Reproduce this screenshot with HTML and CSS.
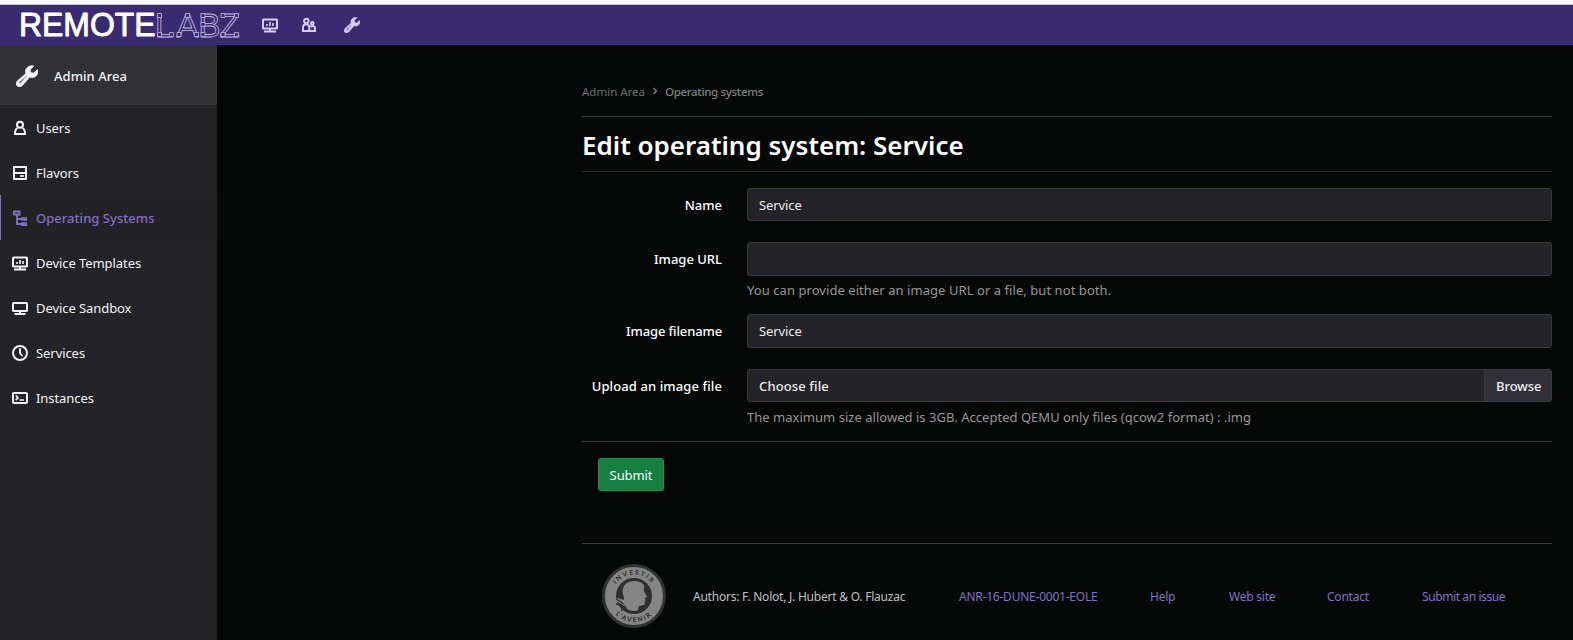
FILE: index.html
```html
<!DOCTYPE html>
<html lang="en">
<head>
<meta charset="utf-8">
<title>Edit operating system: Service</title>
<link rel="stylesheet" href="styles.css">
</head>
<body>
<svg class="defs" aria-hidden="true">
  <symbol id="chart-screen" viewBox="0 0 16 16"><rect x="1" y="2.500" width="14" height="9" rx=".6" fill="none" stroke="currentColor" stroke-width="2"/><path d="M8 11v3M2 14.500h12" stroke="currentColor" stroke-width="2"/><path d="M5 7v2M8 5v4M11 6v3" stroke="currentColor" stroke-width="1.600"/></symbol>
  <symbol id="screen" viewBox="0 0 16 16"><rect x="1" y="3" width="14" height="8" rx=".6" fill="none" stroke="currentColor" stroke-width="2"/><path d="M8 11v3M2.500 14h11" stroke="currentColor" stroke-width="2"/></symbol>
  <symbol id="wrench" viewBox="0 0 22 22"><path fill="currentColor" stroke="currentColor" stroke-width=".7" stroke-linejoin="round" fill-rule="evenodd" d="M17.800.9C14.200-.1 9.500 2.200 9.500 6.200c0 .8 0 1.500.3 2.200L1.500 15.700c-1.700 1.500-1.700 3.800-.3 5.200s3.700 1.300 5.200-.4l7.500-8.400c.7.3 1.400.4 2.300.4 4 0 6.600-4 5.300-7.900l-3.900 3.500-2.900-.6-.5-2.700zM11 11l-6.500 7.200c-.9.900-2-.3-1.100-1.200l7.100-6.400z"/></symbol>
  <symbol id="user" viewBox="0 0 16 16"><circle cx="8" cy="4.800" r="3" fill="none" stroke="currentColor" stroke-width="2"/><path d="M5.500 8C3.700 9 3 11 3 14h10c0-3-.7-5-2.500-6" fill="none" stroke="currentColor" stroke-width="2"/></symbol>
  <symbol id="users" viewBox="0 0 16 16"><g fill="none" stroke="currentColor" stroke-width="1.900"><circle cx="5.300" cy="3.900" r="2.200"/><circle cx="11.300" cy="6.200" r="1.300"/><path d="M2 14V10.500C2 8.500 3 7.300 5 7.300s3.300 1.200 3.300 3.200V14zM8 14h6v-2.300c0-1.700-1-2.700-2.700-2.700-1.300 0-2.200.4-2.800 1.200"/></g></symbol>
  <symbol id="disk" viewBox="0 0 16 16"><path d="M2 2h12v12H2zM2 8h12" fill="none" stroke="currentColor" stroke-width="2" stroke-linejoin="round"/><path d="M8 11h4" stroke="currentColor" stroke-width="1.700"/></symbol>
  <symbol id="tree" viewBox="0 0 16 16"><path d="M2 1.500h5.500v3H2zM5 5v9h5M5 9h5" fill="none" stroke="currentColor" stroke-width="1.900"/><path d="M9 7.200H15v3.500H9zM9 12.300H15V16H9z" fill="currentColor"/></symbol>
  <symbol id="clock" viewBox="0 0 16 16"><circle cx="8" cy="8" r="7" fill="none" stroke="currentColor" stroke-width="2"/><path d="M8 4v4.200l2 2.300" fill="none" stroke="currentColor" stroke-width="1.900" stroke-linecap="round"/></symbol>
  <symbol id="terminal" viewBox="0 0 16 16"><rect x="1" y="3" width="14" height="10" rx=".8" fill="none" stroke="currentColor" stroke-width="2"/><path d="M3.700 5.500L6 7.800l-2.300 2.300M7.500 10H12" fill="none" stroke="currentColor" stroke-width="1.700"/></symbol>
</svg>

<header class="topbar">
  <svg class="brand" viewBox="0 0 222 41" role="img" aria-label="RemoteLabz">
    <text class="brand-solid" x="-1" y="32" textLength="136.500" lengthAdjust="spacingAndGlyphs">REMOTE</text>
    <g class="brand-outline">
      <text y="32.500" x="135 156.500 178.600 199.500">LABZ</text>
      <path class="brand-nodes" d="M137.500 9.500h4v4h-4zM137.500 28.500h4v4h-4zM149.500 28.500h4v4h-4zM157 28.500h4v4h-4zM174.500 28.500h4v4h-4zM165.500 9.500h4v4h-4zM181 9.500h4v4h-4zM181 18.500h4v4h-4zM181 28.500h4v4h-4zM201 9.500h4v4h-4zM214.500 9.500h4v4h-4zM201 28.500h4v4h-4zM214.500 28.500h4v4h-4z"/>
    </g>
  </svg>
  <nav class="topnav">
    <svg><use href="#chart-screen"/></svg>
    <svg><use href="#users"/></svg>
    <svg class="topnav-admin"><use href="#wrench"/></svg>
  </nav>
</header>

<div class="shell">
  <aside class="sidebar">
    <div class="sidebar-title"><svg><use href="#wrench"/></svg><span>Admin Area</span></div>
    <a class="item"><svg><use href="#user"/></svg><span>Users</span></a>
    <a class="item"><svg><use href="#disk"/></svg><span>Flavors</span></a>
    <a class="item active"><svg><use href="#tree"/></svg><span>Operating Systems</span></a>
    <a class="item"><svg><use href="#chart-screen"/></svg><span>Device Templates</span></a>
    <a class="item"><svg><use href="#screen"/></svg><span>Device Sandbox</span></a>
    <a class="item"><svg><use href="#clock"/></svg><span>Services</span></a>
    <a class="item"><svg><use href="#terminal"/></svg><span>Instances</span></a>
  </aside>

  <main class="content">
    <nav class="breadcrumb"><span>Admin Area</span><svg viewBox="0 0 6 8"><path d="M1.500 1l3 3-3 3"/></svg><span class="current">Operating systems</span></nav>
    <h1 class="title"><span>Edit operating system: Service</span></h1>
    <form class="form">
      <div class="row"><label>Name</label><div class="field"><div class="input">Service</div></div></div>
      <div class="row row-url"><label>Image URL</label><div class="field"><div class="input tall"></div><p class="hint">You can provide either an image URL or a file, but not both.</p></div></div>
      <div class="row row-filename"><label class="label-filename">Image filename</label><div class="field"><div class="input tall">Service</div></div></div>
      <div class="row row-upload"><label class="label-upload">Upload an image file</label><div class="field"><div class="input file"><span>Choose file</span><span class="browse">Browse</span></div><p class="hint hint-size">The maximum size allowed is 3GB. Accepted QEMU only files (qcow2 format) : .img</p></div></div>
      <div class="actions"><button class="submit" type="button">Submit</button></div>
    </form>
    <footer class="footer">
      <svg class="seal" viewBox="0 0 64 64">
        <defs><path id="arc-top" d="M10.500 32a21.500 21.500 0 0 1 43 0"/><path id="arc-bottom" d="M5.800 32a26.200 26.200 0 0 0 52.400 0"/></defs>
        <circle cx="32" cy="32" r="30.500" fill="#858585" stroke="#303131" stroke-width="3"/>
        <circle cx="32" cy="32" r="18" fill="#2d2e2e"/>
        <path fill="#858585" d="M23 20.500c3-3.500 10-4.500 15-2.500 3 1.200 4.500 3 4.300 5.500l-.8 2.500 3.500 7-2 1 .4 2.500-.9 1.500.3 2c-1 2-4.500 1.200-6.300 2.500L36 46.500c-4 1-8 .5-11-1.500l-2-3.500c-3 0-6-2-9-5l1.500-2.500 6 2c1-2 .3-3-.3-5-1-4-.7-8 1.800-10.500z"/>
        <path d="M14.500 35l7 5M14 40l6 1M19.500 47l2-5" stroke="#2d2e2e" stroke-width="1.300"/>
        <text class="seal-text"><textPath href="#arc-top" startOffset="50%">INVESTIR</textPath></text>
        <text class="seal-text"><textPath href="#arc-bottom" startOffset="50%">L’AVENIR</textPath></text>
      </svg>
      <span class="authors">Authors: F. Nolot, J. Hubert &amp; O. Flauzac</span>
      <a class="link-anr">ANR-16-DUNE-0001-EOLE</a>
      <a class="link-help">Help</a>
      <a class="link-site">Web site</a>
      <a class="link-contact">Contact</a>
      <a class="link-issue">Submit an issue</a>
    </footer>
  </main>
</div>
</body>
</html>
```

FILE: styles.css
```css
* { box-sizing: border-box; }
body {
  margin: 0;
  height: 640px;
  overflow: hidden;
  display: flex;
  flex-direction: column;
  background: #060807;
  color: #f3f3f5;
  font: 13px/20px "Noto Sans", "Open Sans", sans-serif;
}
.defs { position: absolute; width: 0; height: 0; }

.topbar {
  flex: none;
  height: 45px;
  border-top: 4px solid #f8f8fa;
  box-shadow: inset 0 1px #c9c6d8;
  background: #392b70;
  display: flex;
  align-items: center;
  padding-left: 20px;
}
.brand { width: 222px; height: 41px; overflow: visible; }
.brand-solid {
  font: 400 32.500px "Liberation Sans", Arial, sans-serif;
  fill: #fff;
  stroke: #fff;
  stroke-width: .9;
  stroke-linejoin: round;
}
.brand-outline { fill: none; stroke: #c4bce6; stroke-width: .8; }
.brand-outline text { font: 400 33px "Liberation Sans", Arial, sans-serif; }
.brand-nodes { fill: #392b70; }
.topnav { display: flex; align-items: center; gap: 23px; margin-left: 20px; color: #d6cff8; }
.topnav svg { width: 16px; height: 16px; }
.topnav .topnav-admin { margin-left: 4px; }

.shell { flex: 1; display: flex; min-height: 0; }
.sidebar { width: 217px; background: #242328; flex: none; }
.sidebar-title {
  height: 60px;
  background: #313035;
  display: flex;
  align-items: center;
  gap: 16px;
  padding: 2px 16px 0;
  font-weight: 500;
  letter-spacing: .05px;
}
.sidebar-title svg { width: 22px; height: 22px; }
.item {
  height: 45px;
  display: flex;
  align-items: center;
  gap: 8px;
  padding-left: 12px;
  letter-spacing: -.07px;
}
.item svg { width: 16px; height: 16px; }
.item.active {
  color: #8270c4;
  font-weight: 500;
  letter-spacing: .04px;
  background: #222126;
  box-shadow: inset 1px 0 #8270c4;
}

.content { flex: none; width: 970px; margin-left: 365px; }
.breadcrumb {
  height: 72px;
  padding-top: 37px;
  border-bottom: 1px solid #3a3b3b;
  display: flex;
  gap: 7px;
  font-size: 11.500px;
  color: #6e6f70;
}
.breadcrumb svg { width: 6px; height: 8px; margin-top: 5px; fill: none; stroke: #8a8a8c; stroke-width: 1.300; }
.breadcrumb .current { color: #7f8081; font-weight: 500; letter-spacing: -.33px; }
.title {
  margin: 0;
  height: 55px;
  border-bottom: 1px solid #2a2b2b;
  font-size: 26px;
  line-height: 56px;
  font-weight: 600;
  color: #fff;
}
.form { padding-top: 16px; }
.row { display: flex; height: 54px; }
.row label { width: 140px; text-align: right; font-weight: 500; padding-top: 7px; color: #fff; }
.row .label-filename { letter-spacing: -.13px; }
.row .label-upload { letter-spacing: .1px; }
.field { margin-left: 25px; flex: 1; }
.input {
  height: 33px;
  padding: 0 11px;
  border: 1px solid #39383e;
  border-radius: 3px;
  background: #242328;
  line-height: 32px;
  color: #eeeef0;
  letter-spacing: -.1px;
}
.input.tall { height: 34px; }
.row-url { height: 72px; }
.row-filename { height: 55px; }
.row-upload { height: 72px; }
.hint { margin: 4px 0 0; color: #969696; letter-spacing: .06px; }
.hint-size { margin-top: 5px; letter-spacing: .025px; }
.file { display: flex; justify-content: space-between; padding-right: 0; font-weight: 500; line-height: 32px; letter-spacing: .12px; }
.browse { width: 67px; padding-left: 11px; background: #313036; border-left: 1px solid #39383e; letter-spacing: -.05px; }
.actions { border-top: 1px solid #3a3b3b; padding: 16px; height: 102px; }
.submit {
  width: 66px;
  height: 33px;
  padding: 0;
  border: 1px solid #248f50;
  border-radius: 3px;
  background: #168043;
  color: #f4fff8;
  font: inherit;
  letter-spacing: -.1px;
}
.footer {
  border-top: 1px solid #3a3b3b;
  height: 97px;
  padding: 8px 0 0 20px;
  display: flex;
  align-items: center;
  font-size: 12px;
  letter-spacing: -.23px;
}
.footer span, .footer a { padding-top: 2px; }
.seal { width: 64px; height: 64px; flex: none; }
.seal-text { font: 700 6.500px Lato, sans-serif; fill: #292a2a; letter-spacing: 1.700px; text-anchor: middle; }
.authors { width: 266px; margin-left: 27px; color: #bfc0c1; white-space: nowrap; }
.footer a { color: #8270c4; white-space: nowrap; }
.link-anr { width: 191px; }
.link-help { width: 79px; }
.link-site { width: 98px; }
.link-contact { width: 95px; }
.footer .link-issue { letter-spacing: -.4px; }
```
